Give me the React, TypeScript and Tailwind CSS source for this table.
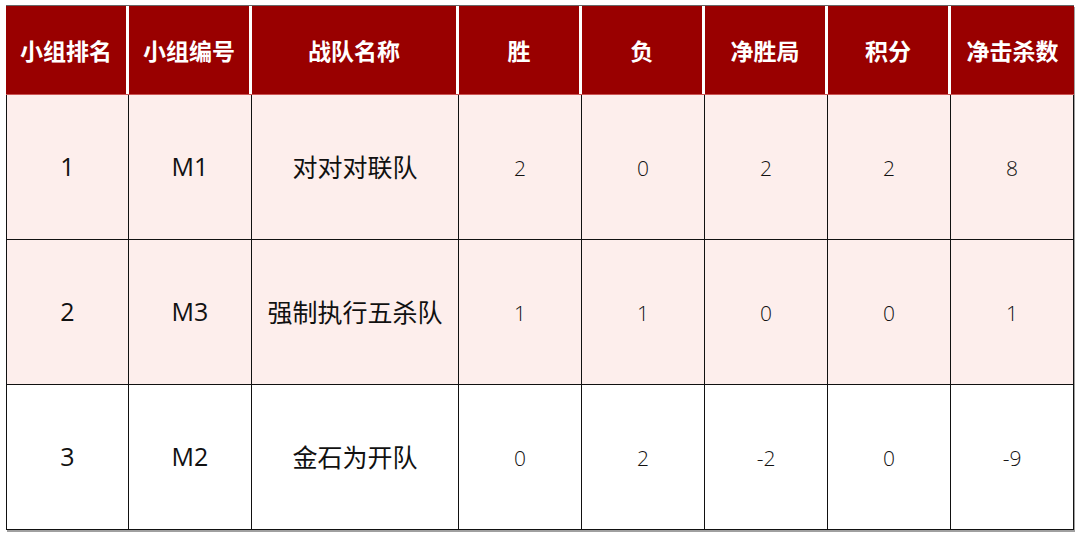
const headers = ["小组排名", "小组编号", "战队名称", "胜", "负", "净胜局", "积分", "净击杀数"];

const rows = [
  { rank: "1", id: "M1", team: "对对对联队", stats: ["2", "0", "2", "2", "8"], pink: true },
  { rank: "2", id: "M3", team: "强制执行五杀队", stats: ["1", "1", "0", "0", "1"], pink: true },
  { rank: "3", id: "M2", team: "金石为开队", stats: ["0", "2", "-2", "0", "-9"], pink: false },
];

const cjk = "font-['Microsoft_YaHei','Noto_Sans_CJK_SC',sans-serif]";

export default function App() {
  return (
    <div className="h-[535px] w-[1080px] bg-white pl-[6px] pt-[5px]">
      <div className="w-[1068px] border-t border-[#666] shadow-[1px_2px_0_#a0a0a0]">
        {/* header */}
        <div className="grid h-[89px] grid-cols-[123px_123px_207px_123px_123px_123px_123px_123px] border-b border-[#c55]">
          {headers.map((h, i) => (
            <div
              key={h}
              className={`flex items-center justify-center bg-[#990000] text-[23px] font-bold text-white ${cjk} ${
                i < headers.length - 1 ? "border-r-[3px] border-white" : ""
              }`}
            >
              {h}
            </div>
          ))}
        </div>

        {/* body */}
        <div className="border-l border-[#111]">
          {rows.map((r) => (
            <div
              key={r.id}
              className={`grid h-[145px] grid-cols-[122px_123px_207px_123px_123px_123px_123px_123px] border-b border-[#111] ${
                r.pink ? "bg-[#fdeeec]" : "bg-white"
              }`}
            >
              <Cell className="font-['Open_Sans',sans-serif] text-[25px] text-[#111]">{r.rank}</Cell>
              <Cell className="font-['Open_Sans',sans-serif] text-[25px] text-[#111]">{r.id}</Cell>
              <Cell className={`${cjk} text-[25px] text-[#111]`}>{r.team}</Cell>
              {r.stats.map((s, i) => (
                <Cell key={i} className="pt-[4px] font-['Open_Sans',sans-serif] text-[21px] font-light text-[#111]">
                  {s}
                </Cell>
              ))}
            </div>
          ))}
        </div>
      </div>
    </div>
  );
}

function Cell({ children, className }: { children: React.ReactNode; className?: string }) {
  return (
    <div className={`flex items-center justify-center border-r border-[#111] ${className ?? ""}`}>
      {children}
    </div>
  );
}
